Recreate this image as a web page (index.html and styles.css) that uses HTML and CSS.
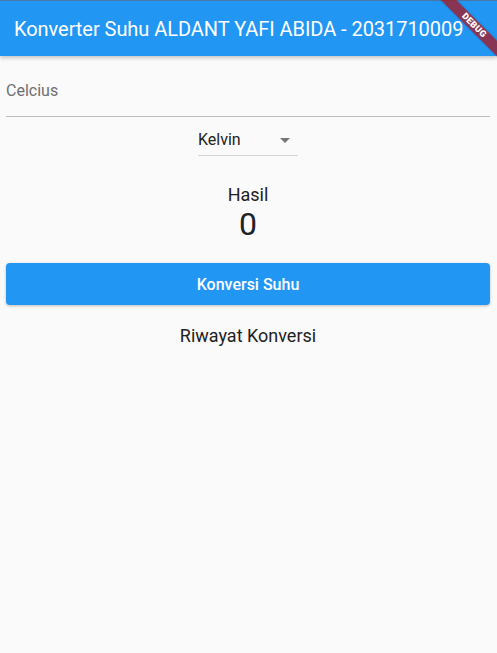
FILE: index.html
```html
<!DOCTYPE html>
<html>
<head>
<meta charset="utf-8">
<link rel="stylesheet" href="styles.css">
</head>
<body>
<header class="appbar">
  <h1 class="title">Konverter Suhu ALDANT YAFI ABIDA - 2031710009</h1>
</header>
<main class="content">
  <div class="field">
    <span class="label">Celcius</span>
  </div>
  <div class="dropdown-row">
    <div class="dropdown">
      <span class="dd-value">Kelvin</span>
      <svg class="dd-arrow" width="10" height="5" viewBox="0 0 10 5"><path d="M0 0 L10 0 L5 5 Z" fill="#757575"/></svg>
    </div>
  </div>
  <div class="result">
    <div class="result-label">Hasil</div>
    <div class="result-value">0</div>
  </div>
  <button class="convert-btn">Konversi Suhu</button>
  <div class="history">Riwayat Konversi</div>
</main>
<div class="banner-clip"><div class="banner">DEBUG</div></div>
</body>
</html>
```
FILE: styles.css
```css
html, body {
  margin: 0;
  padding: 0;
  background: #fafafa;
  font-family: Roboto, "Noto Sans", sans-serif;
  width: 497px;
  height: 653px;
  overflow: hidden;
}
.appbar {
  height: 56px;
  background: #2196f3;
  border-top: 1px solid #4a78a6;
  box-sizing: border-box;
  display: flex;
  align-items: center;
  padding-left: 14px;
  box-shadow: 0 2px 4px rgba(0,0,0,0.22);
  position: relative;
  z-index: 1;
}
.title {
  margin: 0;
  color: #fff;
  font-size: 20px;
  font-weight: 400;
  letter-spacing: -0.05px;
  white-space: nowrap;
}
.content {
  padding: 0 7px 0 6px;
  display: flex;
  flex-direction: column;
}
.field {
  padding-top: 25px;
  padding-bottom: 15px;
  border-bottom: 1px solid #bdbdbd;
  height: 20px;
  line-height: 20px;
}
.label {
  font-size: 16px;
  color: #6f6f6f;
}
.dropdown-row {
  display: flex;
  justify-content: center;
  margin-top: 13px;
}
.dropdown {
  width: 100px;
  height: 20px;
  padding-bottom: 5px;
  border-bottom: 1px solid #d4d4d4;
  display: flex;
  align-items: center;
  justify-content: space-between;
  line-height: 20px;
}
.dd-value {
  font-size: 16px;
  color: #222;
}
.dd-arrow {
  margin-right: 8px;
}
.result {
  margin-top: 28px;
  text-align: center;
  color: #212121;
}
.result-label {
  font-size: 18px;
  line-height: 22px;
}
.result-value {
  font-size: 32px;
  line-height: 36px;
}
.convert-btn {
  margin-top: 21px;
  height: 42px;
  border: none;
  border-radius: 4px;
  background: #2196f3;
  color: #fff;
  font-family: Roboto, sans-serif;
  font-size: 16px;
  font-weight: 500;
  box-shadow: 0 1px 3px rgba(0,0,0,0.25);
}
.history {
  margin-top: 20px;
  text-align: center;
  font-size: 18px;
  line-height: 22px;
  color: #212121;
}
.banner-clip {
  position: absolute;
  top: 0;
  right: 0;
  width: 100px;
  height: 100px;
  overflow: hidden;
  z-index: 2;
}
.banner {
  position: absolute;
  left: 17px;
  top: 20px;
  width: 120px;
  height: 11px;
  line-height: 11px;
  background: rgba(170, 20, 30, 0.75);
  color: #fff;
  font-size: 9px;
  font-weight: 900;
  letter-spacing: 0.3px;
  text-align: center;
  transform: rotate(45deg);
  box-shadow: 0 0 2px rgba(0,0,0,0.3);
}
```
